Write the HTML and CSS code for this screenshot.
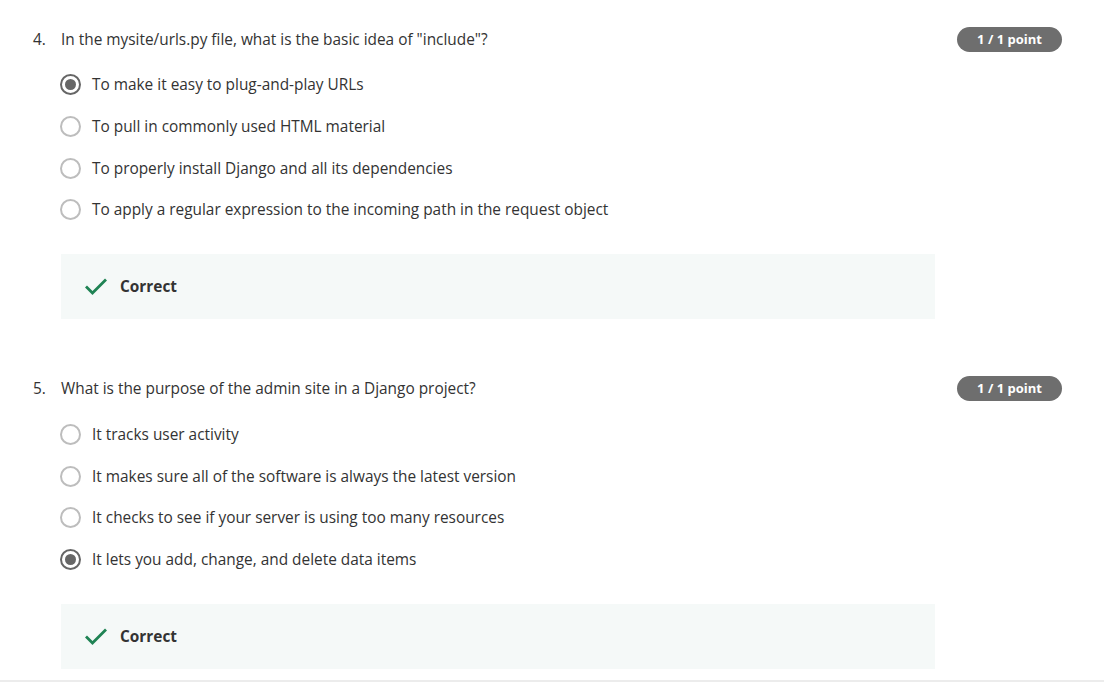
FILE: index.html
```html
<!DOCTYPE html>
<html>
<head>
<meta charset="utf-8">
<link rel="stylesheet" href="styles.css">
</head>
<body>
<div class="page">
  <section class="question">
    <div class="q-head">
      <span class="q-num">4.</span>
      <span class="q-text">In the mysite/urls.py file, what is the basic idea of "include"?</span>
      <span class="badge">1 / 1 point</span>
    </div>
    <ul class="options">
      <li class="option"><span class="radio checked"></span><span>To make it easy to plug-and-play URLs</span></li>
      <li class="option"><span class="radio"></span><span>To pull in commonly used HTML material</span></li>
      <li class="option"><span class="radio"></span><span>To properly install Django and all its dependencies</span></li>
      <li class="option"><span class="radio"></span><span>To apply a regular expression to the incoming path in the request object</span></li>
    </ul>
    <div class="feedback">
      <svg class="check" width="24" height="18" viewBox="0 0 24 18"><path d="M2 9.5 L8.5 16 L22 2.5" fill="none" stroke="#1f8354" stroke-width="2.8"/></svg>
      <span class="fb-text">Correct</span>
    </div>
  </section>
  <section class="question">
    <div class="q-head">
      <span class="q-num">5.</span>
      <span class="q-text">What is the purpose of the admin site in a Django project?</span>
      <span class="badge">1 / 1 point</span>
    </div>
    <ul class="options">
      <li class="option"><span class="radio"></span><span>It tracks user activity</span></li>
      <li class="option"><span class="radio"></span><span>It makes sure all of the software is always the latest version</span></li>
      <li class="option"><span class="radio"></span><span>It checks to see if your server is using too many resources</span></li>
      <li class="option"><span class="radio checked"></span><span>It lets you add, change, and delete data items</span></li>
    </ul>
    <div class="feedback">
      <svg class="check" width="24" height="18" viewBox="0 0 24 18"><path d="M2 9.5 L8.5 16 L22 2.5" fill="none" stroke="#1f8354" stroke-width="2.8"/></svg>
      <span class="fb-text">Correct</span>
    </div>
  </section>
</div>
</body>
</html>
```
FILE: styles.css
```css
* { box-sizing: border-box; }
html, body { margin: 0; padding: 0; background: #fff; }
body {
  font-family: "Open Sans", "Liberation Sans", sans-serif;
  font-size: 15.4px;
  color: #333;
  overflow: hidden;
  height: 683px;
}
.page {
  height: 682px;
  border-bottom: 2px solid #ececec;
  padding: 27px 42px 0 33px;
}
.question { margin-bottom: 58px; }
.q-head {
  display: flex;
  align-items: center;
  height: 24px;
}
.q-num { width: 28px; }
.q-text { flex: 1; }
.badge {
  background: #6e6e6e;
  color: #fff;
  font-weight: 700;
  font-size: 13px;
  height: 25px;
  line-height: 25px;
  width: 105px;
  text-align: center;
  border-radius: 13px;
}
.options {
  list-style: none;
  margin: 23px 0 0 27px;
  padding: 0;
  display: flex;
  flex-direction: column;
  gap: 20px;
}
.option {
  display: flex;
  align-items: center;
  height: 21.7px;
  gap: 11px;
}
.radio {
  width: 21px;
  height: 21px;
  flex: none;
  border-radius: 50%;
  border: 2px solid #bdbdbd;
  display: flex;
  align-items: center;
  justify-content: center;
}
.radio.checked { border-color: #666; }
.radio.checked::after {
  content: "";
  width: 11px;
  height: 11px;
  border-radius: 50%;
  background: #666;
}
.feedback {
  margin: 33px 127px 0 28px;
  background: #f5f9f8;
  height: 65px;
  display: flex;
  align-items: center;
  padding-left: 23px;
  gap: 12px;
}
.check { display: block; }
.fb-text { font-weight: 700; color: #333; }
```
